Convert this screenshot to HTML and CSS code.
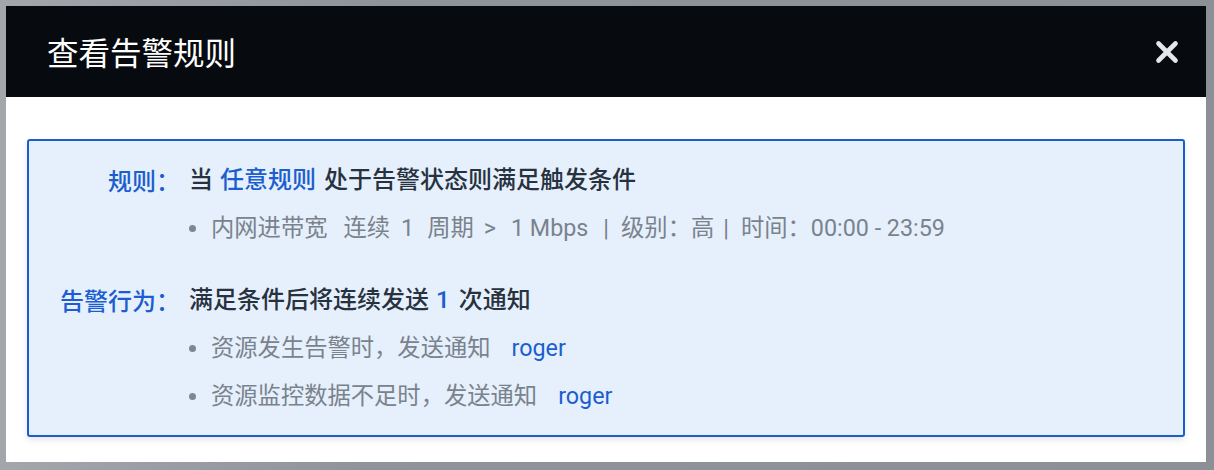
FILE: index.html
```html
<!DOCTYPE html>
<html lang="zh-CN">
<head>
<meta charset="utf-8">
<title>查看告警规则</title>
<link rel="stylesheet" href="styles.css">
</head>
<body>
<div class="backdrop">
  <div class="modal">
    <div class="modal-header">
      <h1 class="modal-title">查看告警规则</h1>
      <button class="close-btn" aria-label="关闭">
        <svg width="24" height="24" viewBox="0 0 24 24"><path d="M3.5 3.5 L20.5 20.5 M20.5 3.5 L3.5 20.5" stroke="#e4e8ed" stroke-width="4.6" stroke-linecap="round" fill="none"/></svg>
      </button>
    </div>
    <div class="modal-body">
      <div class="rule-box">
        <div class="rule-section">
          <div class="rule-label">规则：</div>
          <div class="rule-content">
            <div class="rule-main">当<span class="hl hl-words">任意规则</span>处于告警状态则满足触发条件</div>
            <ul class="rule-list">
              <li class="metric">
                <span class="m-name">内网进带宽</span><span class="m-a">连续</span><span class="m-b">1</span><span class="m-c">周期</span><span class="m-d">&gt;</span><span class="m-e">1 Mbps</span><span class="m-f">|</span><span class="m-g">级别：高</span><span class="m-h">|</span><span class="m-i">时间：00:00 - 23:59</span>
              </li>
            </ul>
          </div>
        </div>
        <div class="rule-section">
          <div class="rule-label">告警行为：</div>
          <div class="rule-content">
            <div class="rule-main">满足条件后将连续发送<span class="hl hl-num">1</span>次通知</div>
            <ul class="rule-list">
              <li>资源发生告警时，发送通知<span class="user">roger</span></li>
              <li>资源监控数据不足时，发送通知<span class="user">roger</span></li>
            </ul>
          </div>
        </div>
      </div>
    </div>
  </div>
</div>
</body>
</html>
```

FILE: styles.css
```css
* { box-sizing: border-box; }

html, body {
  margin: 0;
  padding: 0;
}

body {
  width: 1214px;
  height: 470px;
  overflow: hidden;
  font-family: Roboto, "Noto Sans CJK SC", sans-serif;
}

.backdrop {
  height: 470px;
  padding: 6px 8px 8px 6px;
  background: linear-gradient(90deg, #a3a6ab 0%, #8f949b 30%, #8b9097 100%);
}

.modal {
  width: 1200px;
  height: 456px;
  background: #ffffff;
  display: flex;
  flex-direction: column;
}

.modal-header {
  height: 91px;
  background: #070b10;
  display: flex;
  align-items: center;
  justify-content: space-between;
  padding: 0 27px 0 41px;
}

.modal-title {
  margin: 0;
  font-family: "Noto Sans CJK SC", sans-serif;
  font-weight: 400;
  font-size: 31.5px;
  line-height: 40px;
  color: #ffffff;
  padding-bottom: 2px;
}

.close-btn {
  border: 0;
  background: transparent;
  padding: 0;
  width: 24px;
  height: 24px;
  display: flex;
  cursor: pointer;
}

.modal-body {
  flex: 1;
  padding: 42px 21px 25px 21px;
}

.rule-box {
  height: 298px;
  border: 2px solid #1b5ccf;
  border-radius: 3px;
  background: #e5f0fc;
  box-shadow: 0 3px 6px rgba(0, 0, 0, 0.10);
  padding: 15px 0;
  display: flex;
  flex-direction: column;
  gap: 24px;
}

.rule-section {
  display: grid;
  grid-template-columns: 151px 1fr;
  column-gap: 9px;
}

.rule-label {
  text-align: right;
  font-family: "Noto Sans CJK SC", sans-serif;
  font-size: 24px;
  font-weight: 500;
  line-height: 48px;
  color: #1c5dcf;
}

.rule-main {
  font-size: 24px;
  font-weight: 500;
  line-height: 48px;
  color: #28323f;
  white-space: nowrap;
}

.hl {
  color: #1c5dcf;
}

.hl-words {
  margin: 0 8px 0 7px;
}

.hl-num {
  margin: 0 9px 0 7px;
}

.rule-list {
  list-style: none;
  margin: 0;
  padding: 0;
}

.rule-list li {
  position: relative;
  padding-left: 22px;
  font-size: 23.3px;
  line-height: 48px;
  color: #7a828c;
  white-space: nowrap;
}

.rule-list li::before {
  content: "";
  position: absolute;
  left: 0;
  top: 21px;
  width: 7px;
  height: 7px;
  border-radius: 50%;
  background: #7f868f;
}

.metric span { display: inline-block; }
.m-a { margin-left: 16px; }
.m-b { margin-left: 11px; }
.m-c { margin-left: 13px; }
.m-d { margin-left: 10px; }
.m-e { margin-left: 15px; }
.m-f { margin-left: 15px; }
.m-g { margin-left: 12px; }
.m-h { margin-left: 9px; }
.m-i { margin-left: 12px; }

.user {
  margin-left: 21px;
  color: #1c5dcf;
}
```
